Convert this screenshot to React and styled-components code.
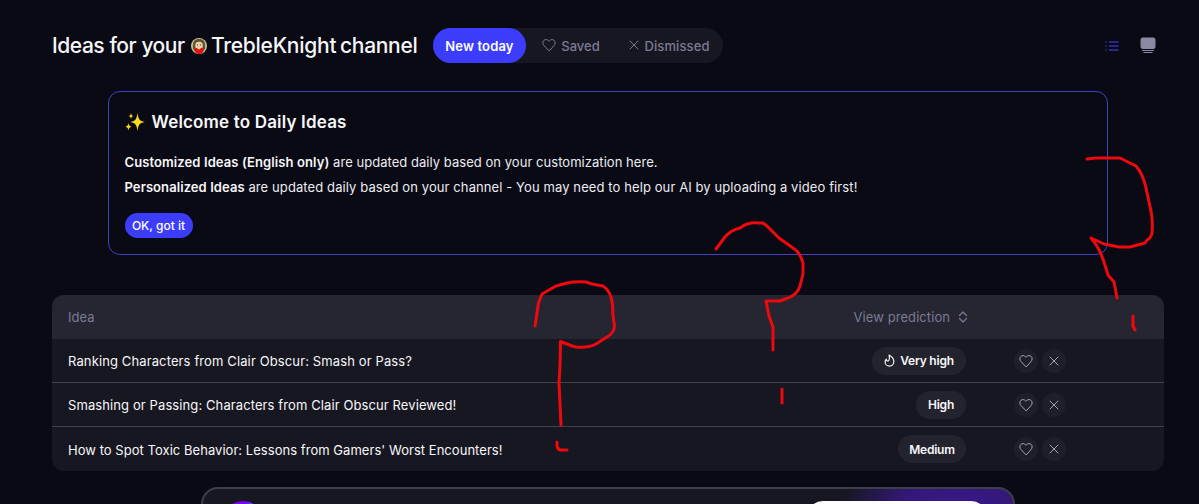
import React from "react";
import styled, { createGlobalStyle } from "styled-components";

const GlobalStyle = createGlobalStyle`
  * { box-sizing: border-box; }
  html, body { margin: 0; background: #0a0a14; }
  body { font-family: Inter, "Liberation Sans", sans-serif; color: #f7f7fa; }
  button { font: inherit; border: 0; padding: 0; color: inherit; }
`;

const Page = styled.main`
  position: relative;
  height: 504px;
  overflow: hidden;
  padding: 28px 35px 0 52px;
  background: #0a0a14;
`;

const Header = styled.header`
  display: flex;
  align-items: center;
  height: 35px;
`;

const Title = styled.h1`
  display: flex;
  align-items: center;
  margin: 0;
  width: 381px;
  font-size: 21px;
  font-weight: 500;
  line-height: 35px;
  white-space: nowrap;
`;

const TitlePart = styled.span`
  width: ${(p) => p.$width}px;
  letter-spacing: ${(p) => p.$spacing || 0}px;
`;

const Avatar = styled.svg`
  flex: none;
  width: 16px;
  height: 16px;
  margin-right: 4px;
`;

const Tabs = styled.nav`
  display: flex;
  width: 290px;
  height: 35px;
  border-radius: 18px;
  background: #171721;
`;

const Tab = styled.button`
  display: flex;
  align-items: center;
  justify-content: center;
  gap: 5px;
  width: ${(p) => p.$width}px;
  height: 35px;
  border-radius: 18px;
  background: ${(p) => (p.$active ? "#3b3dfa" : "transparent")};
  color: ${(p) => (p.$active ? "#ffffff" : "#7b7b93")};
  font-size: 13px;
  font-weight: ${(p) => (p.$active ? 600 : 500)};
  letter-spacing: ${(p) => p.$spacing || 0}px;
  white-space: nowrap;
  svg { margin-bottom: 2px; }
`;

const Views = styled.div`
  display: flex;
  align-items: center;
  gap: 21px;
  margin-left: auto;
  padding-right: 8px;
`;

const Icon = styled.svg`
  display: block;
  flex: none;
  fill: none;
  stroke: currentColor;
  stroke-linecap: round;
  stroke-linejoin: round;
`;

const ListIcon = styled(Icon)`
  color: #3332b5;
`;

const Notice = styled.section`
  display: flex;
  flex-direction: column;
  align-items: flex-start;
  width: 1000px;
  height: 164px;
  margin: 28px 0 0 56px;
  padding: 18px 15.5px;
  border: 1px solid #4043c4;
  border-radius: 12px;
`;

const NoticeTitle = styled.h2`
  display: flex;
  align-items: center;
  gap: 7px;
  margin: 0 0 16px;
  font-size: 17px;
  font-weight: 600;
  line-height: 24px;
  letter-spacing: 0.17px;
`;

const NoticeText = styled.p`
  margin: 0;
  font-size: 13px;
  line-height: 25px;
  letter-spacing: ${(p) => p.$spacing}px;
  white-space: nowrap;
  color: #ececf2;
  b { font-weight: 600; color: #f7f7fa; letter-spacing: ${(p) => p.$bold}px; }
`;

const ConfirmButton = styled.button`
  width: 68px;
  height: 25px;
  margin-top: 13px;
  flex: none;
  border-radius: 13px;
  background: #3b3dfa;
  color: #fff;
  font-size: 12px;
  font-weight: 500;
  line-height: 25px;
`;

const Table = styled.section`
  width: 1112px;
  margin-top: 40px;
  border-radius: 12px;
  overflow: hidden;
  background: #171721;
`;

const Row = styled.div`
  display: grid;
  grid-template-columns: 1fr 120px 198px;
  align-items: center;
  height: 44px;
  padding-left: 16px;
  border-bottom: ${(p) => (p.$last ? 0 : "1px solid #42424e")};
`;

const HeadRow = styled(Row)`
  border: 0;
  background: #252632;
  color: #7b7b93;
  font-size: 13px;
`;

const HeadCell = styled.div`
  display: flex;
  align-items: center;
  justify-content: ${(p) => (p.$end ? "flex-end" : "flex-start")};
  gap: 8px;
  margin-right: ${(p) => (p.$end ? -2 : 0)}px;
  letter-spacing: ${(p) => (p.$end ? 0.07 : 0)}px;
  white-space: nowrap;
`;

const Idea = styled.div`
  padding-top: ${(p) => (p.$last ? 2 : 0)}px;
  font-size: 13px;
  white-space: nowrap;
  letter-spacing: ${(p) => p.$spacing}px;
`;

const Pill = styled.div`
  display: flex;
  align-items: center;
  justify-content: center;
  justify-self: end;
  gap: 5px;
  width: ${(p) => p.$width}px;
  height: 28px;
  border-radius: 14px;
  background: #22232d;
  font-size: 12px;
  font-weight: 600;
  letter-spacing: -0.2px;
  white-space: nowrap;
`;

const Actions = styled.div`
  display: flex;
  gap: 4px;
  padding-left: 48px;
`;

const RoundButton = styled.button`
  display: grid;
  place-items: center;
  width: 24px;
  height: 24px;
  border-radius: 50%;
  background: #1f1f29;
  color: #a3a3b5;
`;

const Promo = styled.section`
  display: flex;
  justify-content: space-between;
  width: 814px;
  height: 80px;
  margin: 16px 0 0 149px;
  padding: 12px 26px 0 20px;
  border: 2px solid #3e3e4a;
  border-radius: 17px;
  background: radial-gradient(ellipse 120px 90px at 756px 30px, #3a1890 0%, #331878 50%, rgba(23, 23, 33, 0) 100%), #171721;
`;

const PromoBadge = styled.div`
  width: 40px;
  height: 40px;
  border-radius: 50%;
  background: linear-gradient(90deg, #7c00f2 55%, #5550f4 75%);
`;

const PromoButton = styled.div`
  width: 180px;
  height: 40px;
  border-radius: 16px;
  background: #fff;
`;

const Ink = styled.svg`
  position: absolute;
  inset: 0;
  pointer-events: none;
  fill: none;
  stroke: #ee090e;
  stroke-width: 3;
  stroke-linecap: round;
  stroke-linejoin: round;
`;

const Heart = ({ size = 14 }) => (
  <Icon width={size} height={size} viewBox="0 0 14 14">
    <path d="M7 12.7 1.9 7.500C.6 6 .5 3.900 1.700 2.600c1.300-1.400 3.500-1.300 4.700 0l.6.7.6-.7c1.200-1.300 3.400-1.400 4.700 0 1.200 1.300 1.100 3.400-.2 4.900z" />
  </Icon>
);

const Cross = ({ size = 10 }) => (
  <Icon width={size} height={size} viewBox="0 0 10 10">
    <path d="m1 1 8 8M9 1 1 9" />
  </Icon>
);

const Flame = () => (
  <Icon width="11" height="13" viewBox="0 0 12 14" strokeWidth="1.3">
    <path d="M5.500 1c3 1.500 5.200 4.300 5.200 7.200 0 2.800-2 4.900-4.700 4.900S1.200 11.200 1.200 8.600c0-1.200.5-2.200 1.300-3 .1 1.300.8 2.100 1.600 2.100C6 7.600 6.300 3.800 5.500 1Z" />
  </Icon>
);

const Sparkles = () => (
  <svg width="20" height="20" viewBox="0 0 20 20" fill="#fddc16">
    <path d="M12.500 1c.9 5.800 1.500 7.900 7.200 9-5.700 1.100-6.300 3.200-7.200 9-.9-5.800-1.500-7.900-7.200-9 5.700-1.100 6.300-3.200 7.200-9Z" />
    <path d="M6 1c.3 2 .9 2.700 2.700 3-1.800.4-2.400 1.100-2.700 3-.3-1.900-.9-2.600-2.700-3C5.100 3.700 5.700 3 6 1ZM3.500 11c.4 2.300 1 3.200 3.100 3.700-2.100.5-2.700 1.300-3.100 3.700-.4-2.400-1-3.200-3.100-3.700 2.100-.5 2.700-1.400 3.100-3.700Z" />
  </svg>
);

const ideas = [
  { text: "Ranking Characters from Clair Obscur: Smash or Pass?", level: "Very high", width: 94, hot: true, spacing: 0.12 },
  { text: "Smashing or Passing: Characters from Clair Obscur Reviewed!", level: "High", width: 50, spacing: 0.1 },
  { text: "How to Spot Toxic Behavior: Lessons from Gamers' Worst Encounters!", level: "Medium", width: 68, spacing: 0.04 },
];

export default function App() {
  return (
    <>
      <GlobalStyle />
      <Page>
        <Header>
          <Title>
            <TitlePart $width={139} $spacing={-0.45}>Ideas for your</TitlePart>
            <Avatar viewBox="0 0 16 16">
              <circle cx="8" cy="8" r="8" fill="#c8c2a5" />
              <path d="M2 11C1 3 4 1 8 1s7 2 6 10l-3 3H5z" fill="#65522b" />
              <ellipse cx="8" cy="7.500" rx="3.800" ry="4" fill="#e9cfae" />
              <path d="M4 5q4-3 8 0L11 3H5z" fill="#65522b" />
              <path d="M6 7h1m2 0h1" stroke="#55402d" />
              <path d="M3 12q1.500-2.500 3-2L8 12l2-2q1.500-.5 3 2L11 15.300q-3 1.300-6 0z" fill="#e3120f" />
            </Avatar>
            <TitlePart $width={129} $spacing={-0.25}>TrebleKnight</TitlePart>
            <TitlePart $width={80} $spacing={-0.3}>channel</TitlePart>
          </Title>
          <Tabs>
            <Tab $active $width={93} $spacing={0.15}>New today</Tab>
            <Tab $width={90}><Heart /> Saved</Tab>
            <Tab $width={107} $spacing={0.1}><Cross /><span>Dismissed</span></Tab>
          </Tabs>
          <Views>
            <ListIcon width="14" height="12" viewBox="0 0 14 12" strokeWidth="1.500">
              <path d="M4.500 2H13M4.500 6H13M4.500 10H13M1 2h.1M1 6h.1M1 10h.1" />
            </ListIcon>
            <svg width="16" height="17" viewBox="0 0 16 17" fill="#8989a2">
              <rect x="0.500" y="0.500" width="15" height="11.500" rx="2.500" />
              <path d="M2 13h12v1H2zM3.500 15h9v1h-9z" />
            </svg>
          </Views>
        </Header>

        <Notice>
          <NoticeTitle><Sparkles />Welcome to Daily Ideas</NoticeTitle>
          <NoticeText $spacing={0.04} $bold={0.1}><b>Customized Ideas (English only)</b> are updated daily based on your customization here.</NoticeText>
          <NoticeText $spacing={0.1} $bold={0.08}><b>Personalized Ideas</b> are updated daily based on your channel - You may need to help our AI by uploading a video first!</NoticeText>
          <ConfirmButton>OK, got it</ConfirmButton>
        </Notice>

        <Table>
          <HeadRow>
            <HeadCell>Idea</HeadCell>
            <HeadCell $end>
              View prediction
              <Icon width="10" height="12" viewBox="0 0 10 12" strokeWidth="1.200">
                <path d="M1.500 4.500 5 1l3.500 3.500M1.500 7.500 5 11l3.500-3.500" />
              </Icon>
            </HeadCell>
          </HeadRow>
          {ideas.map((idea, i) => (
            <Row key={idea.text} $last={i === ideas.length - 1}>
              <Idea $spacing={idea.spacing} $last={i === ideas.length - 1}>{idea.text}</Idea>
              <Pill $width={idea.width}>{idea.hot && <Flame />}{idea.level}</Pill>
              <Actions>
                <RoundButton aria-label="Save"><Heart /></RoundButton>
                <RoundButton aria-label="Dismiss"><Cross /></RoundButton>
              </Actions>
            </Row>
          ))}
        </Table>

        <Promo>
          <PromoBadge />
          <PromoButton />
        </Promo>

        <Ink width="1199" height="504" viewBox="0 0 1199 504">
          <path d="M535 326 538.500 303 542 294 556 286 567 283Q576 281 586 282L592 284 603 286Q611 291 612.500 304L613 316 614.500 326Q614 333 607 337L596 344Q589 348 576 347L572 346 560.500 341.500 560 366 559 383 561 425M557 442V445Q557 449 560 450H567" />
          <path d="M716 249 725 237Q731 230 740 228 748 222 758 223H763L767 226 779 238 793 248Q800 252 803 263V274L800 286Q797 296 785 299L780 301H766L769 316 773 327V350M782 389V403" />
          <path d="M1087 159 1096 158H1120L1136 166Q1143 174 1146 188L1151 211Q1153 221 1152 233 1151 238 1147 240L1145 243 1130 247H1119L1104 244 1091 238Q1099 247 1104 262L1108 275 1114 282 1117 298M1133 316V326L1135 330" />
        </Ink>
      </Page>
    </>
  );
}
